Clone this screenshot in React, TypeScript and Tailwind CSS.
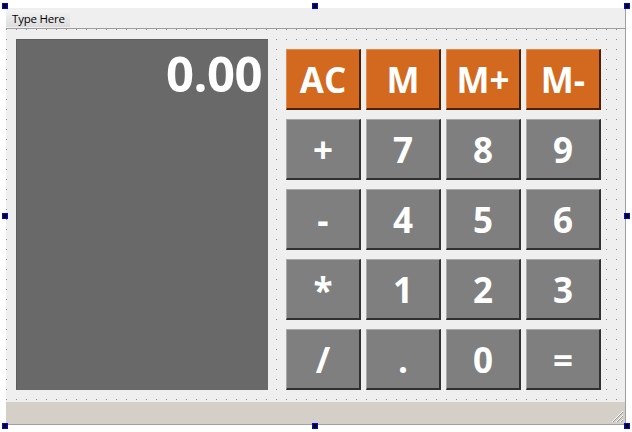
const keys = [
  ["AC", "M", "M+", "M-"],
  ["+", "7", "8", "9"],
  ["-", "4", "5", "6"],
  ["*", "1", "2", "3"],
  ["/", ".", "0", "="],
];

function Handle(props: { pos: string }) {
  return <div className={`absolute w-[6px] h-[6px] bg-black border border-[#0000ff] ${props.pos}`} />;
}

function Key(props: { label: string; orange?: boolean }) {
  const tone = props.orange
    ? "bg-[#d2691e] border-t-[#e58a48] border-l-[#e58a48] border-r-[#4a2000] border-b-[#4a2000]"
    : "bg-[#7f7f7f] border-t-[#a8a8a8] border-l-[#a8a8a8] border-r-[#303030] border-b-[#303030]";
  return (
    <button
      className={`h-[61px] w-[75px] flex items-center justify-center border-t border-l border-r-2 border-b-2 text-white font-bold text-[35px] leading-none ${tone}`}
    >
      {props.label}
    </button>
  );
}

export default function App() {
  return (
    <div className="relative w-[632px] h-[432px] bg-white font-['Open_Sans',sans-serif] overflow-hidden">
      <div className="ml-[6px] mt-[8px] w-[620px] h-[417px] flex flex-col border-r border-b border-[#a0a0a0] bg-[#efefef]">
        {/* menu bar */}
        <div className="h-[21px] flex-none border-b border-[#a0a0a0] flex items-start pt-[2px]">
          <div className="h-[17px] w-[64px] pl-[6px] flex items-center text-[11.5px] text-black bg-gradient-to-b from-[#f4f4f4] to-[#dcdcdc] tracking-[-0.2px]">
            Type Here
          </div>
        </div>

        {/* central widget */}
        <div className="flex-1 flex items-start pl-[10px] pt-[10px] bg-[#efefef] bg-[conic-gradient(from_270deg_at_1px_1px,#8c8c8c_25%,transparent_0)] bg-[size:10px_10px]">
          <div className="w-[252px] h-[351px] bg-[#696969] border-l border-t border-[#5e5e5e] flex justify-end pr-[6px]">
            <span className="text-white font-bold text-[49px] leading-none mt-[9px] tracking-[-0.5px]">0.00</span>
          </div>
          <div className="ml-[18px] mt-[10px] grid grid-cols-4 gap-x-[5px] gap-y-[9px]">
            {keys.map((row, r) =>
              row.map((k) => <Key key={k} label={k} orange={r === 0} />)
            )}
          </div>
        </div>

        {/* status bar */}
        <div className="h-[22px] flex-none bg-[#d4d0c8] flex justify-end items-end">
          <svg width="14" height="14" viewBox="0 0 14 14" className="mb-[1px] mr-[1px]">
            <path d="M13 2 L2 13 M13 6 L6 13 M13 10 L10 13" stroke="#ffffff" strokeWidth="1" />
            <path d="M13 3 L3 13 M13 7 L7 13 M13 11 L11 13" stroke="#9a9a9a" strokeWidth="1" />
          </svg>
        </div>
      </div>

      <Handle pos="left-[2px] top-[3px]" />
      <Handle pos="left-[312px] top-[3px]" />
      <Handle pos="left-[624px] top-[3px]" />
      <Handle pos="left-[2px] top-[213px]" />
      <Handle pos="left-[624px] top-[213px]" />
      <Handle pos="left-[2px] top-[423px]" />
      <Handle pos="left-[312px] top-[423px]" />
      <Handle pos="left-[624px] top-[423px]" />
    </div>
  );
}
